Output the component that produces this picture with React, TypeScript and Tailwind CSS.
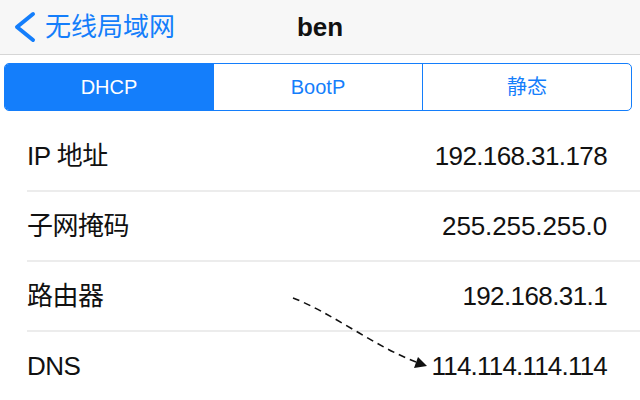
const rows = [
  { label: "IP 地址", value: "192.168.31.178", track: "tracking-[-0.6px]" },
  { label: "子网掩码", value: "255.255.255.0", track: "tracking-[-0.1px]" },
  { label: "路由器", value: "192.168.31.1", track: "tracking-[-0.6px]" },
  { label: "DNS", value: "114.114.114.114", track: "tracking-[-0.8px]" },
];

const segments = ["DHCP", "BootP", "静态"];

const App = () => {
  return (
    <div
      className="relative h-[400px] w-[640px] overflow-hidden bg-white text-[#111]"
      style={{ fontFamily: '"Liberation Sans", "Noto Sans CJK SC", sans-serif' }}
    >
      {/* nav bar */}
      <div className="relative flex h-[55px] items-center border-b border-[#d6d6d6] bg-[#f7f7f7]">
        <div className="flex items-center text-[#147efb]">
          <svg className="ml-[13px]" width="24" height="32" viewBox="0 0 24 32">
            <polyline
              points="20,3 4,16 20,29"
              fill="none"
              stroke="currentColor"
              strokeWidth="4"
              strokeLinecap="round"
              strokeLinejoin="round"
            />
          </svg>
          <span className="ml-[8px] text-[26px] leading-none">无线局域网</span>
        </div>
        <span className="absolute left-1/2 -translate-x-1/2 text-[26px] font-bold leading-none">ben</span>
      </div>

      {/* segmented control */}
      <div className="ml-[4px] mt-[8px] flex h-[48px] w-[628px] overflow-hidden rounded-[5px] border-[1.5px] border-[#147efb]">
        {segments.map((s, i) => (
          <div
            key={s}
            className={
              i === 0
                ? "flex flex-1 items-center justify-center bg-[#147efb] text-[20px] text-white"
                : "flex flex-1 items-center justify-center border-l-[1.5px] border-[#147efb] text-[20px] text-[#147efb]"
            }
          >
            {s}
          </div>
        ))}
      </div>

      {/* rows */}
      <div className="mt-[11px]">
        {rows.map((r) => (
          <div key={r.label} className="ml-[27px]">
            <div className="flex h-[70px] items-center justify-between border-b-2 border-[#ececec] pr-[33px]">
              <span className="text-[26px] tracking-[-0.5px]">{r.label}</span>
              <span className={`text-[26px] ${r.track}`}>{r.value}</span>
            </div>
          </div>
        ))}
      </div>

      {/* annotation arrow */}
      <svg className="pointer-events-none absolute left-0 top-0" width="640" height="400">
        <path
          d="M293 298 C330 312 376 347 416 362"
          fill="none"
          stroke="#111"
          strokeWidth="1.6"
          strokeDasharray="7 5"
        />
        <polygon points="427,366 414,368 418,357" fill="#111" />
      </svg>
    </div>
  );
};

export default App;
